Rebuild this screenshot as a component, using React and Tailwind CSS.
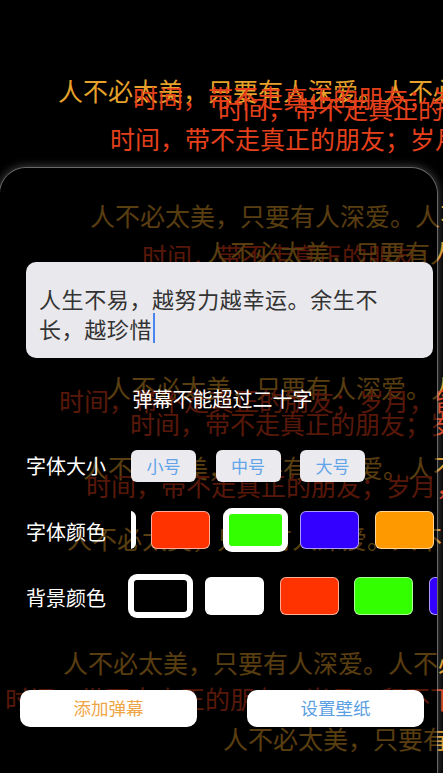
import React from "react";

function Swatch({ color, selected }) {
  if (selected) {
    return (
      <div
        className={`w-[59px] h-[38px] shrink-0 rounded-[6px] border-[3px] border-white shadow-[0_0_0_3px_#ffffff] ${color}`}
      />
    );
  }
  return (
    <div
      className={`w-[59px] h-[38px] shrink-0 rounded-[6px] border-[1.5px] border-white/60 ${color}`}
    />
  );
}

export default function App() {
  return (
    <div className="relative w-[443px] h-[773px] bg-black overflow-hidden pt-[168px] font-['Noto_Sans_CJK_SC',sans-serif]">
      {/* danmaku layer */}
      <div className="absolute inset-0 text-[25px] leading-[30px] whitespace-nowrap">
        <span className="absolute left-[58px] top-[75px] text-[#e6a22a]">人不必太美，只要有人深爱。人不必太美</span>
        <span className="absolute left-[133px] top-[82px] text-[#e4401c]">时间，带不走真正的朋友；岁月，留不下</span>
        <span className="absolute left-[218px] top-[93px] text-[#e4401c]">时间，带不走真正的朋友；岁月</span>
        <span className="absolute left-[110px] top-[123px] text-[#e4401c]">时间，带不走真正的朋友；岁月，留不下</span>

        <span className="absolute left-[90px] top-[200px] text-[#e6a22a]">人不必太美，只要有人深爱。人不必</span>
        <span className="absolute left-[142px] top-[240px] text-[#e4401c]">时间，带不走真正的朋友；岁月</span>
        <span className="absolute left-[205px] top-[237px] text-[#e6a22a]">人不必太美，只要有人深爱</span>
        <span className="absolute left-[106px] top-[372px] text-[#e6a22a]">人不必太美，只要有人深爱。人不必</span>
        <span className="absolute left-[59px] top-[385px] text-[#e4401c]">时间，带不走真正的朋友；岁月，留不下</span>
        <span className="absolute left-[130px] top-[408px] text-[#e4401c]">时间，带不走真正的朋友；岁月</span>
        <span className="absolute left-[83px] top-[452px] text-[#e6a22a]">人不必太美，只要有人深爱。人不必</span>
        <span className="absolute left-[86px] top-[470px] text-[#e4401c]">时间，带不走真正的朋友；岁月，留不下</span>
        <span className="absolute left-[67px] top-[523px] text-[#e6a22a]">人不必太美，只要有人深爱。人不必</span>
        <span className="absolute left-[63px] top-[647px] text-[#e6a22a]">人不必太美，只要有人深爱。人不必</span>
        <span className="absolute left-[5px] top-[683px] text-[#e4401c]">时间，带不走真正的朋友；岁月，留不下</span>
        <span className="absolute left-[223px] top-[723px] text-[#e6a22a]">人不必太美，只要有人深爱</span>
      </div>

      {/* sheet */}
      <div className="relative z-10 w-[437px] h-[605px] rounded-t-[26px] bg-black/[0.62] overflow-hidden shadow-[0_0_0_1px_rgba(160,160,160,0.55),0_0_8px_2px_rgba(140,140,140,0.45)]">
        <div className="mt-[94px] ml-[26px] w-[407px] h-[96px] rounded-[10px] bg-[#e9e8ed] pl-[13px] pt-[21px] text-[22px] leading-[30px] tracking-[0.6px] text-[#333333]">
          人生不易，越努力越幸运。余生不
          <br />
          长，越珍惜
          <span className="inline-block w-[2px] h-[30px] bg-[#4a84ee] align-top ml-[1px]" />
        </div>

        <div className="mt-[27px] h-[28px] leading-[28px] text-[20px] text-white text-center pl-[8px]">
          弹幕不能超过二十字
        </div>

        <div className="mt-[37px] h-[32px] flex items-center pl-[26px]">
          <div className="w-[100px] shrink-0 text-[20px] text-white leading-[28px]">字体大小</div>
          <div className="ml-[5px] flex gap-[19.5px]">
            <div className="w-[65px] h-[32px] rounded-[6px] bg-[#ebeaef] flex items-center justify-center text-[17px] text-[#62a4ea]">小号</div>
            <div className="w-[65px] h-[32px] rounded-[6px] bg-[#ebeaef] flex items-center justify-center text-[17px] text-[#62a4ea]">中号</div>
            <div className="w-[65px] h-[32px] rounded-[6px] bg-[#ebeaef] flex items-center justify-center text-[17px] text-[#62a4ea]">大号</div>
          </div>
        </div>

        <div className="mt-[26px] h-[44px] flex items-center pl-[26px]">
          <div className="w-[100px] shrink-0 text-[20px] text-white leading-[28px] pt-[3px]">字体颜色</div>
          <div className="ml-[5px] flex-1 h-full overflow-hidden flex items-center">
            <div className="ml-[-54.5px] flex gap-[15.5px] shrink-0">
              <Swatch color="bg-white" />
              <Swatch color="bg-[#ff3300]" />
              <Swatch color="bg-[#33ff00]" selected />
              <Swatch color="bg-[#3300ff]" />
              <Swatch color="bg-[#ff9900]" />
              <Swatch color="bg-black" />
            </div>
          </div>
        </div>

        <div className="mt-[22px] h-[44px] flex items-center pl-[26px]">
          <div className="w-[100px] shrink-0 text-[20px] text-white leading-[28px] pt-[4px]">背景颜色</div>
          <div className="flex-1 h-full overflow-hidden flex items-center pl-[4.5px]">
            <div className="flex gap-[15.5px] shrink-0">
              <Swatch color="bg-black" selected />
              <Swatch color="bg-white" />
              <Swatch color="bg-[#ff3300]" />
              <Swatch color="bg-[#33ff00]" />
              <Swatch color="bg-[#3300ff]" />
              <Swatch color="bg-[#ff9900]" />
            </div>
          </div>
        </div>

        <div className="mt-[72px] flex pl-[20px] gap-[50px]">
          <div className="w-[177px] h-[37px] rounded-[10px] bg-white flex items-center justify-center text-[17.5px] text-[#f0a545]">添加弹幕</div>
          <div className="w-[177px] h-[37px] rounded-[10px] bg-white flex items-center justify-center text-[17.5px] text-[#5b9fe3]">设置壁纸</div>
        </div>
      </div>
    </div>
  );
}
